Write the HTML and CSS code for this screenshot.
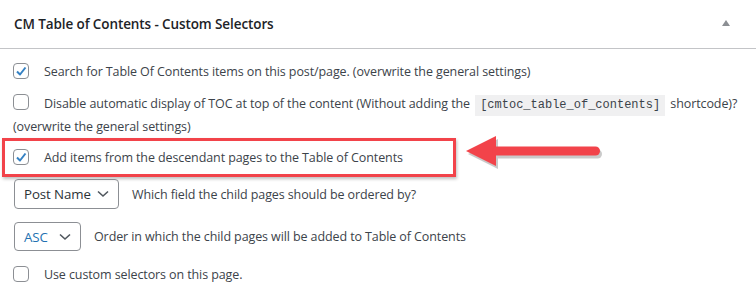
FILE: index.html
```html
<!DOCTYPE html>
<html>
<head>
    <link rel="stylesheet" href="styles.css">
</head>
<body>

<div class="postbox">
    <div class="postbox-header">
        <h2>CM Table of Contents - Custom Selectors</h2>
        <svg class="toggle" width="8" height="6" viewBox="0 0 8 6"><polygon points="4,0 8,6 0,6" fill="#8c8f94"/></svg>
    </div>
    <div class="inside">
        <div class="row check-row r1">
            <span class="checkbox checked"><svg width="14" height="14" viewBox="0 0 14 14"><polyline points="3,7.5 6,10.5 11.5,3.5" fill="none" stroke="#3582c4" stroke-width="2" stroke-linejoin="round"/></svg></span>
            <label>Search for Table Of Contents items on this post/page. (overwrite the general settings)</label>
        </div>
        <div class="row check-row r2">
            <span class="checkbox"></span>
            <label>Disable automatic display of TOC at top of the content (Without adding the <code>[cmtoc_table_of_contents]</code> shortcode)?<br><span class="outdent">(overwrite the general settings)</span></label>
        </div>
        <div class="row check-row r3">
            <span class="checkbox checked"><svg width="14" height="14" viewBox="0 0 14 14"><polyline points="3,7.5 6,10.5 11.5,3.5" fill="none" stroke="#3582c4" stroke-width="2" stroke-linejoin="round"/></svg></span>
            <label>Add items from the descendant pages to the Table of Contents</label>
            <div class="highlight"></div>
            <svg class="pointer" width="150" height="44" viewBox="0 0 150 44">
                <g fill="#8a8a8a" opacity="0.45" transform="translate(2,3)">
                    <polygon points="4,19 34,4 34,34"/>
                    <rect x="30" y="14.5" width="108" height="9" rx="4.5"/>
                </g>
                <polygon points="4,19 34,4 34,34" fill="#f2434a"/>
                <rect x="30" y="14.5" width="108" height="9" rx="4.5" fill="#f2434a"/>
            </svg>
        </div>
        <div class="row select-row r4">
            <div class="select select-name"><span>Post Name</span><svg width="12" height="8" viewBox="0 0 12 8"><polyline points="1,1.5 6,6 11,1.5" fill="none" stroke="#50575e" stroke-width="1.6"/></svg></div>
            <label>Which field the child pages should be ordered by?</label>
        </div>
        <div class="row select-row r5">
            <div class="select select-order"><span>ASC</span><svg width="12" height="8" viewBox="0 0 12 8"><polyline points="1,1.5 6,6 11,1.5" fill="none" stroke="#50575e" stroke-width="1.6"/></svg></div>
            <label>Order in which the child pages will be added to Table of Contents</label>
        </div>
        <div class="row check-row r6">
            <span class="checkbox"></span>
            <label>Use custom selectors on this page.</label>
        </div>
    </div>
</div>

</body>
</html>
```

FILE: styles.css
```css
body {
    margin: 0;
    background: #fff;
    font-family: "Open Sans", "Noto Sans", sans-serif;
    font-size: 12.5px;
    letter-spacing: -0.1px;
    color: #3c434a;
}
.postbox {
    width: 756px;
    height: 300px;
    overflow: hidden;
}
.postbox-header {
    height: 48px;
    border-bottom: 1px solid #c3c4c7;
    display: flex;
    align-items: center;
    justify-content: space-between;
    padding: 0 26px 0 14px;
}
.postbox-header h2 {
    margin: 0;
    font-size: 13.5px;
    font-weight: 600;
    letter-spacing: -0.1px;
    color: #1d2327;
}
.toggle {
    margin-top: -2px;
}
.inside {
    padding: 12px 0 0 13px;
}
.row {
    display: flex;
    align-items: center;
    position: relative;
}
.check-row {
    line-height: 21px;
    align-items: flex-start;
}
.check-row label {
    margin-left: 15px;
}
.checkbox {
    width: 16px;
    height: 16px;
    box-sizing: border-box;
    border: 1px solid #8c8f94;
    border-radius: 4px;
    background: #fff;
    flex-shrink: 0;
    margin-top: 2px;
    display: flex;
    align-items: center;
    justify-content: center;
}
.r2 .checkbox {
    margin-top: 1px;
}
.outdent {
    margin-left: -31px;
}
code {
    font-family: "Liberation Mono", monospace;
    font-size: 12px;
    letter-spacing: 0;
    background: #f0f0f1;
    padding: 3px 5px 4px;
    margin: 0 2px;
}
.r1 { margin-bottom: 11px; }
.r2 { margin-bottom: 10px; }
.r3 { margin-bottom: 11px; }
.r4 { margin-bottom: 13px; }
.r5 { margin-bottom: 13px; }
.select {
    height: 30px;
    box-sizing: border-box;
    border: 1px solid #8c8f94;
    border-radius: 4px;
    padding: 0 9px 0 9px;
    display: flex;
    align-items: center;
    justify-content: space-between;
    font-size: 13.3px;
    color: #2c3338;
    margin-left: 1px;
}
.select-name { width: 105px; }
.select-order {
    width: 67px;
    height: 29px;
    color: #2271b1;
}
.select-row label {
    margin-left: 13px;
}
.highlight {
    position: absolute;
    left: -11px;
    top: -9px;
    width: 448px;
    height: 33px;
    border: 3px solid #f2434a;
    box-shadow: 1px 2px 3px rgba(0, 0, 0, 0.25);
}
.pointer {
    position: absolute;
    left: 449px;
    top: -15px;
}
```
